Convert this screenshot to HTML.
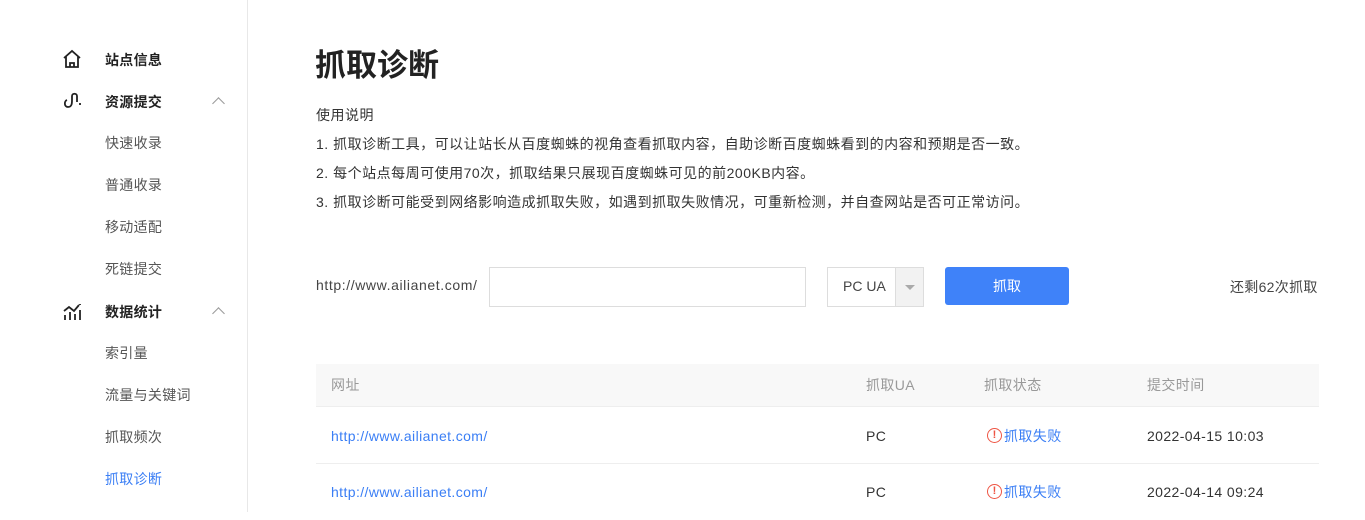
<!DOCTYPE html>
<html><head><meta charset="utf-8"><style>
*{margin:0;padding:0;box-sizing:border-box}
body{width:1365px;height:512px;overflow:hidden;background:#fff;font-family:"Liberation Sans","Noto Sans CJK SC",sans-serif;font-size:14px;color:#333;position:relative}
.side{position:absolute;left:0;top:0;width:248px;height:512px;border-right:1px solid #e8e8e8}
.it{position:absolute;left:105px;line-height:20px;color:#555;letter-spacing:0.3px}
.hd{color:#222;font-weight:bold}
.act{color:#3a7ef5}
.ic{position:absolute;left:62px}
.car{position:absolute;left:214px;width:9px;height:9px;border-left:1.5px solid #999;border-top:1.5px solid #999;transform:rotate(45deg)}
.a{position:absolute;white-space:nowrap}
h1{position:absolute;left:315px;top:46px;font-size:31px;font-weight:bold;color:#222;line-height:40px}
.desc{position:absolute;left:316px;top:101px;line-height:29px;color:#333;letter-spacing:0.5px}
.inp{position:absolute;left:489px;top:267px;width:317px;height:40px;border:1px solid #ddd}
.sel{position:absolute;left:827px;top:267px;width:97px;height:40px;border:1px solid #ddd}
.sel span{position:absolute;left:15px;top:10px;color:#444}
.sel i{position:absolute;right:0;top:0;width:28px;height:38px;background:#f2f2f2;border-left:1px solid #ddd}
.sel i:after{content:"";position:absolute;left:9px;top:17px;border:5px solid transparent;border-top:5px solid #aaa}
.btn{position:absolute;left:945px;top:267px;width:124px;height:38px;background:#3f82f9;border-radius:3px;color:#fff;text-align:center;line-height:38px}
.th{position:absolute;left:316px;top:364px;width:1003px;height:43px;background:#f8f8f8;border-bottom:1px solid #eee;color:#999}
.row{position:absolute;left:316px;width:1003px;height:56px;border-bottom:1px solid #eee}
.c{position:absolute;top:0;line-height:56px;white-space:nowrap;letter-spacing:0.4px}
.th .c{line-height:43px}
.lk{color:#3a7ef5}
.err{color:#3a7ef5}
.err b{display:inline-block;width:15px;height:15px;border:1.3px solid #e54;border-radius:50%;color:#e54;font-size:11px;line-height:13px;text-align:center;margin-right:2px;vertical-align:middle;font-weight:bold;position:relative;top:-2px;letter-spacing:0}
</style></head><body>
<div class="side">
<svg class="ic" style="top:49px" width="20" height="20" viewBox="0 0 20 20" fill="none" stroke="#222" stroke-width="1.8"><path d="M2 9L10 2l8 7M4 7.5V18h12V7.5M8 18v-4h4v4"/></svg>
<div class="it hd" style="top:50px">站点信息</div>
<svg class="ic" style="top:91px" width="20" height="20" viewBox="0 0 20 20" fill="none" stroke="#222" stroke-width="1.8"><path d="M5 9c-3 1-3 7 1 7s4-4 4-7V5c0-3 5-3 5 0v6M18 12v2"/></svg>
<div class="it hd" style="top:92px">资源提交</div><div class="car" style="top:99px"></div>
<div class="it" style="top:133px">快速收录</div>
<div class="it" style="top:175px">普通收录</div>
<div class="it" style="top:217px">移动适配</div>
<div class="it" style="top:259px">死链提交</div>
<svg class="ic" style="top:301px" width="20" height="20" viewBox="0 0 20 20" fill="none" stroke="#222" stroke-width="1.8"><path d="M2 10l5-4 5 4 5-6M3 14v5M8 11v8M13 13v6M18 9v10M18 3v1"/></svg>
<div class="it hd" style="top:302px">数据统计</div><div class="car" style="top:309px"></div>
<div class="it" style="top:343px">索引量</div>
<div class="it" style="top:385px">流量与关键词</div>
<div class="it" style="top:427px">抓取频次</div>
<div class="it act" style="top:469px">抓取诊断</div>
</div>
<h1>抓取诊断</h1>
<div class="desc">使用说明<br>1. 抓取诊断工具，可以让站长从百度蜘蛛的视角查看抓取内容，自助诊断百度蜘蛛看到的内容和预期是否一致。<br>2. 每个站点每周可使用70次，抓取结果只展现百度蜘蛛可见的前200KB内容。<br>3. 抓取诊断可能受到网络影响造成抓取失败，如遇到抓取失败情况，可重新检测，并自查网站是否可正常访问。</div>
<div class="a" style="left:316px;top:277px;color:#444;letter-spacing:0.6px">http://www.ailianet.com/</div>
<div class="inp"></div>
<div class="sel"><span>PC UA</span><i></i></div>
<div class="btn">抓取</div>
<div class="a" style="left:1230px;top:277px;color:#444;letter-spacing:0.3px">还剩62次抓取</div>
<div class="th"><div class="c" style="left:15px">网址</div><div class="c" style="left:550px">抓取UA</div><div class="c" style="left:668px">抓取状态</div><div class="c" style="left:831px">提交时间</div></div>
<div class="row" style="top:408px"><div class="c lk" style="left:15px">http://www.ailianet.com/</div><div class="c" style="left:550px">PC</div><div class="c err" style="left:671px"><b>!</b>抓取失败</div><div class="c" style="left:831px">2022-04-15 10:03</div></div>
<div class="row" style="top:464px;border-bottom:none"><div class="c lk" style="left:15px">http://www.ailianet.com/</div><div class="c" style="left:550px">PC</div><div class="c err" style="left:671px"><b>!</b>抓取失败</div><div class="c" style="left:831px">2022-04-14 09:24</div></div>
</body></html>
